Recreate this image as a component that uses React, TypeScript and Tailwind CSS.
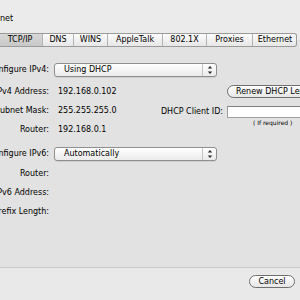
import React from "react";

const tabs = [
  { label: "TCP/IP", w: "w-[45px]", sel: true },
  { label: "DNS", w: "w-[31px]" },
  { label: "WINS", w: "w-[34px]" },
  { label: "AppleTalk", w: "w-[55px]" },
  { label: "802.1X", w: "w-[44px]" },
  { label: "Proxies", w: "w-[46px]" },
  { label: "Ethernet", w: "w-[44px]" },
];

function Arrows() {
  return (
    <svg width="6" height="10" viewBox="0 0 6 10">
      <path d="M3 1 L5.2 3.6 L0.8 3.6 Z" fill="#2a2a2a" />
      <path d="M3 9 L5.2 6.4 L0.8 6.4 Z" fill="#2a2a2a" />
    </svg>
  );
}

function Select({ value }: { value: string }) {
  return (
    <div className="ml-[5px] flex h-[14px] w-[163px] items-center rounded-[3px] border border-[#8e8e8e] bg-gradient-to-b from-[#ffffff] to-[#ebebeb] shadow-[0_1px_0_rgba(0,0,0,0.08)]">
      <div className="flex-1 pl-[9px] leading-[12px]">{value}</div>
      <div className="flex h-full w-[14px] items-center justify-center border-l border-[#c4c4c4]">
        <Arrows />
      </div>
    </div>
  );
}

function Label({ text, w = "w-[49px]" }: { text: string; w?: string }) {
  return (
    <div className={`flex shrink-0 justify-end ${w}`}>
      <span className="shrink-0 whitespace-nowrap">{text}</span>
    </div>
  );
}

function Row({ label, value }: { label: string; value?: string }) {
  return (
    <div className="flex h-[12px] items-center leading-[12px]">
      <Label text={label} />
      {value && <span className="ml-[9px] whitespace-nowrap">{value}</span>}
    </div>
  );
}

export default function App() {
  return (
    <div className="h-[300px] w-[300px] overflow-hidden bg-[#e9e9e9] font-['DejaVu_Sans',sans-serif] text-[8px] leading-[10px] text-black">
      <div className="h-[40px] bg-[#ebebeb] pt-[14px]">
        <span>net</span>
      </div>

      <div className="flex h-[228px] flex-col border-b border-[#c9c9c9] bg-[#e2e2e2]">
        <div className="-mt-[7px] ml-[-2px] flex h-[14px] w-[299px] shrink-0 overflow-hidden rounded-r-[3px] border-y border-r border-[#9a9a9a] bg-gradient-to-b from-[#fcfcfc] to-[#e7e7e7]">
          {tabs.map((t, i) => (
            <div
              key={t.label}
              className={`flex h-full shrink-0 items-center justify-center leading-[12px] ${t.w} ${
                i < tabs.length - 1 ? "border-r border-[#b4b4b4]" : ""
              } ${t.sel ? "bg-gradient-to-b from-[#d8d8d8] to-[#c8c8c8]" : ""}`}
            >
              {t.label}
            </div>
          ))}
        </div>

        <div className="mt-[16px] flex h-[14px] items-center">
          <Label text="Configure IPv4:" />
          <Select value="Using DHCP" />
        </div>

        <div className="mt-[8px] flex">
          <div className="flex w-[169px] shrink-0 flex-col gap-[7px] pt-[1px]">
            <Row label="IPv4 Address:" value="192.168.0.102" />
            <Row label="Subnet Mask:" value="255.255.255.0" />
            <Row label="Router:" value="192.168.0.1" />
          </div>
          <div className="flex w-[160px] shrink-0 flex-col">
            <div className="ml-[58px] flex h-[13px] w-[100px] items-center whitespace-nowrap rounded-full border border-[#6f6f6f] bg-gradient-to-b from-[#ffffff] to-[#e6e6e6] pl-[8px] leading-[11px]">
              Renew DHCP Lease
            </div>
            <div className="mt-[8px] flex h-[12px] items-center leading-[12px]">
              <Label text="DHCP Client ID:" w="w-[54px]" />
              <div className="ml-[4px] h-[12px] w-[90px] border border-[#a0a0a0] border-t-[#7e7e7e] bg-white" />
            </div>
            <div className="ml-[84px] mt-[1px] whitespace-nowrap text-[6px] leading-[8px]">( If required )</div>
          </div>
        </div>

        <div className="mt-[11px] flex h-[14px] items-center">
          <Label text="Configure IPv6:" />
          <Select value="Automatically" />
        </div>

        <div className="mt-[7px] flex flex-col gap-[7px]">
          <Row label="Router:" />
          <Row label="IPv6 Address:" />
          <Row label="Prefix Length:" />
        </div>
      </div>

      <div className="flex justify-end pr-[5px] pt-[7px]">
        <div className="flex h-[13px] w-[46px] items-center justify-center rounded-full border border-[#6f6f6f] bg-gradient-to-b from-[#ffffff] to-[#e6e6e6] leading-[11px]">
          Cancel
        </div>
      </div>
    </div>
  );
}
